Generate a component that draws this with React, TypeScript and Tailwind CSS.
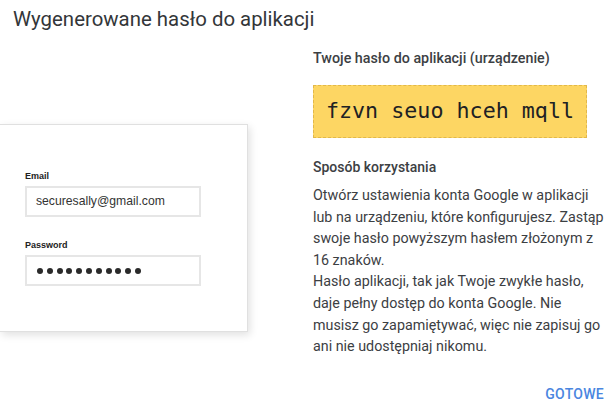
export default function App() {
  const dots = Array.from({ length: 11 });

  return (
    <div className="flex h-[412px] w-[616px] flex-col overflow-hidden bg-white font-['Roboto',sans-serif] text-[#3c4043]">
      <div className="h-[44px] pl-[13px] pt-[5px]">
        <h1 className="text-[20.4px] leading-[28px] text-[#333639]">Wygenerowane hasło do aplikacji</h1>
      </div>

      <div className="flex">
        {/* left: illustration of the sign-in card */}
        <div className="w-[313px] pt-[80px]">
          <div className="h-[208px] w-[248px] border-y border-r border-[#e0e0e0] bg-white pl-[25px] pt-[45px] font-['Liberation_Sans',Arial,sans-serif] shadow-[2px_3px_8px_rgba(0,0,0,0.12)]">
            <p className="mb-[4px] text-[9px] font-bold leading-[12px] text-[#222]">Email</p>
            <div className="flex h-[31px] w-[176px] items-center border-2 border-[#e6e6e6] pl-[9px] text-[12.2px] text-[#333]">
              securesally@gmail.com
            </div>
            <p className="mb-[4px] mt-[22px] text-[9px] font-bold leading-[12px] text-[#222]">Password</p>
            <div className="flex h-[31px] w-[176px] items-center gap-[3.8px] border-2 border-[#e6e6e6] pl-[10px]">
              {dots.map((_, i) => (
                <span key={i} className="h-[6px] w-[6px] rounded-full bg-[#2a2a2a]" />
              ))}
            </div>
          </div>
        </div>

        {/* right: password and instructions */}
        <div className="w-[295px] pt-[4px]">
          <p className="text-[14.3px] font-medium leading-[20px]">Twoje hasło do aplikacji (urządzenie)</p>
          <div className="mt-[17px] flex h-[53px] w-[274px] items-center justify-center border border-dashed border-[#e2b84a] bg-[#fdd663] font-['DejaVu_Sans_Mono',monospace] text-[21.7px] text-[#202124]">
            fzvn seuo hceh mqll
          </div>
          <p className="mt-[19px] text-[14px] font-medium leading-[20px]">Sposób korzystania</p>
          <div className="mt-[8px] text-[14.3px] leading-[21.6px]">
            <p>
              Otwórz ustawienia konta Google w aplikacji lub na urządzeniu, które konfigurujesz. Zastąp swoje hasło
              powyższym hasłem złożonym z 16 znaków.
            </p>
            <p>
              Hasło aplikacji, tak jak Twoje zwykłe hasło, daje pełny dostęp do konta Google. Nie musisz go
              zapamiętywać, więc nie zapisuj go ani nie udostępniaj nikomu.
            </p>
          </div>
        </div>
      </div>

      <div className="mt-auto flex justify-end pb-[8px] pr-[12px]">
        <button className="text-[14px] font-medium leading-[20px] tracking-[0.02em] text-[#4a86e0]">GOTOWE</button>
      </div>
    </div>
  );
}
